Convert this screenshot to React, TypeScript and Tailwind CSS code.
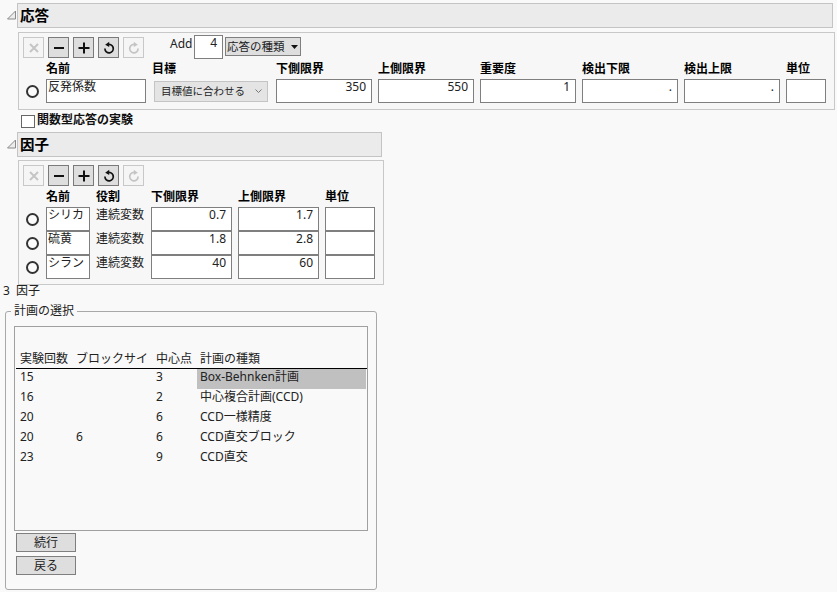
import React from "react";

const font = "font-['Noto_Sans','Noto_Sans_CJK_JP',sans-serif]";

function Triangle() {
  return (
    <svg width="17" height="12" viewBox="0 0 17 12" className="shrink-0">
      <path d="M7.5 9 L15.5 9 L15.5 1 Z" fill="#ececec" stroke="#8a8a8a" strokeWidth="1" />
    </svg>
  );
}

function SectionHead({ title, w }: { title: string; w: string }) {
  return (
    <div className="flex items-center">
      <Triangle />
      <div className={`${w} h-[25px] border border-[#c4c4c4] bg-[#ebebeb] pl-[2px] pb-[1px] flex items-center text-[14.5px] leading-none font-bold text-black`}>
        {title}
      </div>
    </div>
  );
}

function ToolIcon({ kind }: { kind: string }) {
  const c = kind === "x" || kind === "redo" ? "#c4c4c4" : "#111";
  return (
    <svg width="14" height="14" viewBox="0 0 14 14" fill="none" stroke={c} strokeWidth="2">
      {kind === "x" && <path d="M3 3 L11 11 M11 3 L3 11" strokeWidth="1.8" />}
      {kind === "minus" && <path d="M2 7 H12" />}
      {kind === "plus" && <path d="M1.5 7 H12.5 M7 1.5 V12.5" />}
      {kind === "undo" && (
        <>
          <path d="M5.2 3.9 A4.2 4.2 0 1 1 2.9 7.6" strokeWidth="1.7" />
          <path d="M7.2 0.8 L3.2 3.8 L7.2 6 Z" fill={c} stroke="none" />
        </>
      )}
      {kind === "redo" && (
        <>
          <path d="M8.8 3.9 A4.2 4.2 0 1 0 11.1 7.6" strokeWidth="1.7" />
          <path d="M6.8 0.8 L10.8 3.8 L6.8 6 Z" fill={c} stroke="none" />
        </>
      )}
    </svg>
  );
}

function ToolBtn({ kind }: { kind: string }) {
  const off = kind === "x" || kind === "redo";
  return (
    <div
      className={`w-[21px] h-[21px] flex items-center justify-center border ${
        off ? "border-[#c8c8c8] bg-[#f5f5f5]" : "border-[#7a7a7a] bg-[#dedede]"
      }`}
    >
      <ToolIcon kind={kind} />
    </div>
  );
}

function Toolbar() {
  return (
    <div className="flex gap-1">
      {["x", "minus", "plus", "undo", "redo"].map((k) => (
        <ToolBtn key={k} kind={k} />
      ))}
    </div>
  );
}

function Radio() {
  return <div className="w-[13px] h-[13px] rounded-full border-2 border-[#333] bg-[#fbfbfb]" />;
}

function Field({ v, w }: { v?: string; w: string }) {
  return (
    <div className={`${w} h-[24px] border border-[#7f7f7f] bg-white px-[5px] text-right text-xs leading-[14px] text-[#222]`}>
      {v}
    </div>
  );
}

function Name({ v, w }: { v: string; w: string }) {
  return (
    <div className={`${w} h-[24px] border border-[#7f7f7f] bg-white pl-px text-xs leading-[14px] text-[#222] whitespace-nowrap overflow-hidden`}>
      {v}
    </div>
  );
}

const Head = ({ t, w }: { t: string; w: string }) => (
  <div className={`${w} text-xs leading-[16px] font-bold text-black whitespace-nowrap`}>{t}</div>
);

export default function App() {
  const designs = [
    ["15", "", "3", "Box-Behnken計画"],
    ["16", "", "2", "中心複合計画(CCD)"],
    ["20", "", "6", "CCD一様精度"],
    ["20", "6", "6", "CCD直交ブロック"],
    ["23", "", "9", "CCD直交"],
  ];
  return (
    <div className={`${font} w-[837px] h-[592px] overflow-hidden bg-[#f9f9f9] pt-[3px] text-[#222]`}>
      <SectionHead title="応答" w="w-[816px]" />

      {/* Responses panel */}
      <div className="ml-[18px] mt-[4px] w-[817px] h-[78px] border border-[#c8c8c8] bg-[#f7f7f7] pl-[4px] pt-[2px]">
        <div className="flex">
          <div className="pt-[2px]">
            <Toolbar />
          </div>
          <div className="ml-[26px] flex">
            <span className="text-xs leading-[18px] w-[24px] text-[#222]">Add</span>
            <div className="w-[29px] h-[24px] border border-[#7f7f7f] bg-white px-[5px] text-right text-xs leading-[14px] text-[#222]">4</div>
            <div className="ml-[2px] mt-[2px] w-[76px] h-[19px] border border-[#7f7f7f] bg-[#dedede] pl-[1px] flex items-center text-[11.5px] leading-none text-[#222] whitespace-nowrap">
              応答の種類
              <svg width="7" height="4" viewBox="0 0 7 4" className="ml-[6px]"><path d="M0 0 H7 L3.5 4 Z" fill="#111" /></svg>
            </div>
          </div>
        </div>
        <div className="flex mt-[2px] pl-[23px]">
          <Head t="名前" w="w-[106px]" />
          <Head t="目標" w="w-[124px]" />
          <Head t="下側限界" w="w-[102px]" />
          <Head t="上側限界" w="w-[102px]" />
          <Head t="重要度" w="w-[102px]" />
          <Head t="検出下限" w="w-[102px]" />
          <Head t="検出上限" w="w-[102px]" />
          <Head t="単位" w="w-[40px]" />
        </div>
        <div className="flex items-start mt-[2px]">
          <div className="w-[23px] h-[24px] pl-[3px] flex items-center pt-[1px]">
            <Radio />
          </div>
          <Name v="反発係数" w="w-[100px]" />
          <div className="ml-[8px] mt-[2px] w-[114px] h-[21px] border border-[#c4c4c4] bg-[#e4e4e4] pl-[6px] flex items-center text-[10.5px] leading-none text-[#222] whitespace-nowrap">
            目標値に合わせる
            <svg width="7" height="5" viewBox="0 0 7 5" fill="none" stroke="#777" className="ml-[10px]"><path d="M0.5 0.5 L3.5 3.5 L6.5 0.5" /></svg>
          </div>
          <div className="ml-[8px] flex gap-[6px]">
            <Field v="350" w="w-[96px]" />
            <Field v="550" w="w-[96px]" />
            <Field v="1" w="w-[96px]" />
            <Field v="." w="w-[96px]" />
            <Field v="." w="w-[96px]" />
            <Field w="w-[40px]" />
          </div>
        </div>
      </div>

      {/* Checkbox */}
      <div className="ml-[21px] mt-[5px] h-[14px] flex items-start">
        <div className="w-[14px] h-[13px] border border-[#666] bg-white" />
        <span className="ml-[2px] text-xs leading-[10px] font-bold text-[#111]">関数型応答の実験</span>
      </div>

      <div className="mt-[3px]">
        <SectionHead title="因子" w="w-[365px]" />
      </div>

      {/* Factors panel */}
      <div className="ml-[18px] mt-[3px] w-[366px] h-[125px] border border-[#c8c8c8] bg-[#f7f7f7] pl-[4px] pt-[4px]">
        <Toolbar />
        <div className="flex mt-[3px] pl-[23px]">
          <Head t="名前" w="w-[50px]" />
          <Head t="役割" w="w-[55px]" />
          <Head t="下側限界" w="w-[87px]" />
          <Head t="上側限界" w="w-[87px]" />
          <Head t="単位" w="w-[50px]" />
        </div>
        <div className="mt-[2px]">
          {[
            ["シリカ", "0.7", "1.7"],
            ["硫黄", "1.8", "2.8"],
            ["シラン", "40", "60"],
          ].map(([n, lo, hi]) => (
            <div key={n} className="flex items-start">
              <div className="w-[23px] h-[24px] pl-[3px] pt-[1px] flex items-center">
                <Radio />
              </div>
              <Name v={n} w="w-[44px]" />
              <div className="ml-[6px] w-[55px] text-xs leading-[15px] text-[#222] whitespace-nowrap">連続変数</div>
              <div className="flex gap-[6px]">
                <Field v={lo} w="w-[81px]" />
                <Field v={hi} w="w-[81px]" />
                <Field w="w-[50px]" />
              </div>
            </div>
          ))}
        </div>
      </div>

      <div className="ml-[3px] text-xs leading-[12px] h-[12px] text-[#222] whitespace-pre">3  因子</div>

      {/* Design group */}
      <div className="relative ml-[5px] mt-[14px] w-[372px] h-[279px] rounded-[3px] border border-[#a8a8a8] pl-[8px] pt-[14px]">
        <div className="absolute left-[5px] top-[-8px] bg-[#f9f9f9] px-[3px] text-xs leading-[14px] text-[#222]">計画の選択</div>
        <div className="w-[354px] h-[205px] border border-[#a0a0a0] pt-[24px]">
          <div className="ml-px h-[18px] border-b border-black flex text-xs leading-[15px] text-[#222] whitespace-nowrap overflow-hidden">
            <span className="pl-[4px] w-[60px]">実験回数</span>
            <span className="w-[80px] overflow-hidden pr-[5px]">ブロックサイ</span>
            <span className="w-[44px]">中心点</span>
            <span>計画の種類</span>
          </div>
          {designs.map((d, i) => (
            <div key={i} className="ml-px h-[20px] flex text-xs leading-[16px] text-[#222]">
              <span className="pl-[4px] w-[60px]">{d[0]}</span>
              <span className="w-[80px]">{d[1]}</span>
              <span className="w-[41px]">{d[2]}</span>
              <span className={`w-[169px] pl-[3px] ${i === 0 ? "bg-[#c0c0c0]" : ""}`}>{d[3]}</span>
            </div>
          ))}
        </div>
        <div className="ml-[2px] mt-[2px] flex flex-col gap-[4px]">
          <div className="w-[60px] h-[19px] border border-[#7f7f7f] bg-[#dedede] flex items-center justify-center text-xs leading-none text-[#222]">続行</div>
          <div className="w-[60px] h-[19px] border border-[#7f7f7f] bg-[#dedede] flex items-center justify-center text-xs leading-none text-[#222]">戻る</div>
        </div>
      </div>
    </div>
  );
}
